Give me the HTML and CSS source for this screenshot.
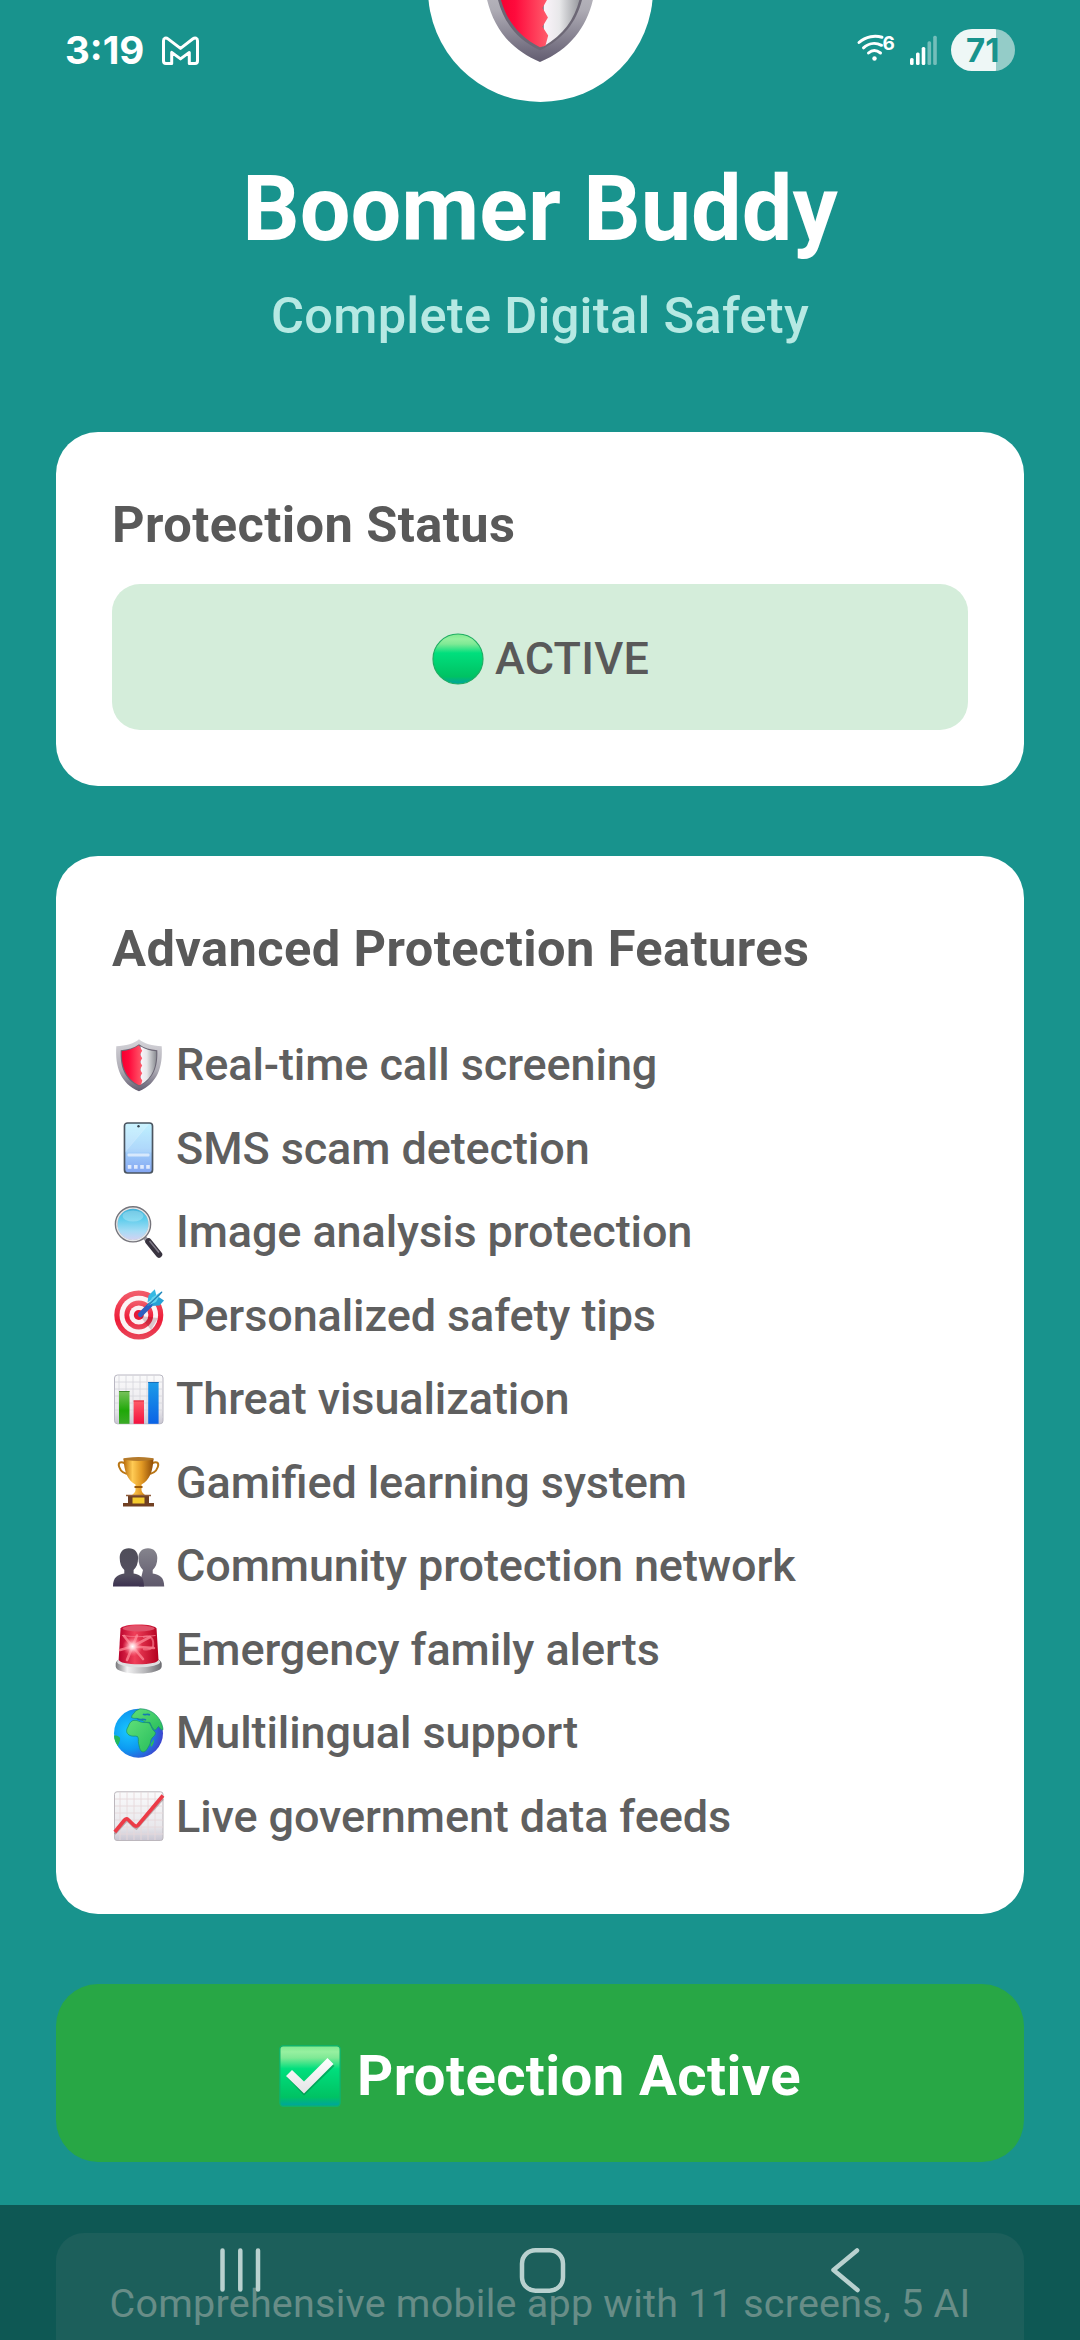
FILE: index.html
```html
<!DOCTYPE html>
<html lang="en">
<head>
<meta charset="utf-8">
<title>Boomer Buddy</title>
<link rel="stylesheet" href="styles.css">
</head>
<body>
<svg class="defs" width="0" height="0" aria-hidden="true">
  <defs>
    <linearGradient id="rim" x1="0" y1="0" x2="0" y2="1"><stop offset="0" stop-color="#d6d5da"/><stop offset=".6" stop-color="#adabb4"/><stop offset="1" stop-color="#625c70"/></linearGradient>
    <linearGradient id="shieldRed" x1="0" y1="0" x2="1" y2="0"><stop offset="0" stop-color="#f5002f"/><stop offset=".35" stop-color="#ff0a3c"/><stop offset="1" stop-color="#ff5d6c"/></linearGradient>
    <linearGradient id="shieldWhite" x1="0" y1="0" x2="1" y2="0"><stop offset="0" stop-color="#fbf4fa"/><stop offset=".4" stop-color="#e8e8ea"/><stop offset="1" stop-color="#8b8d93"/></linearGradient>
    <linearGradient id="green" x1="0" y1="0" x2="0" y2="1"><stop offset="0" stop-color="#7fea90"/><stop offset=".1" stop-color="#96f0a0"/><stop offset=".2" stop-color="#7fe995"/><stop offset=".38" stop-color="#00df7d"/><stop offset=".85" stop-color="#00c263"/><stop offset="1" stop-color="#00a3a0"/></linearGradient>
    <linearGradient id="phoneGlass" x1="0" y1="0" x2="0" y2="1"><stop offset="0" stop-color="#b6efff"/><stop offset=".5" stop-color="#a5d4fb"/><stop offset="1" stop-color="#83a5f2"/></linearGradient>
    <linearGradient id="lens" x1="0" y1="0" x2="0" y2="1"><stop offset="0" stop-color="#3fb0d8"/><stop offset=".35" stop-color="#5fcdec"/><stop offset=".7" stop-color="#a5dcf5"/><stop offset="1" stop-color="#d9d0f2"/></linearGradient>
    <linearGradient id="paper" x1="0" y1="0" x2="0" y2="1"><stop offset="0" stop-color="#fafafb"/><stop offset=".7" stop-color="#e9e8ec"/><stop offset="1" stop-color="#c9c6d2"/></linearGradient>
    <linearGradient id="barGreen" x1="0" y1="0" x2="0" y2="1"><stop offset="0" stop-color="#79c25c"/><stop offset=".6" stop-color="#1fa808"/><stop offset="1" stop-color="#3bab27"/></linearGradient>
    <linearGradient id="barRed" x1="0" y1="0" x2="0" y2="1"><stop offset="0" stop-color="#ff5c68"/><stop offset="1" stop-color="#f3113f"/></linearGradient>
    <linearGradient id="barBlue" x1="0" y1="0" x2="0" y2="1"><stop offset="0" stop-color="#1d9ce8"/><stop offset="1" stop-color="#0a63e6"/></linearGradient>
    <linearGradient id="gold" x1="0" y1="0" x2="1" y2="0"><stop offset="0" stop-color="#b86a08"/><stop offset=".3" stop-color="#ffcb55"/><stop offset=".6" stop-color="#e39a24"/><stop offset="1" stop-color="#8d4a06"/></linearGradient>
    <linearGradient id="person" x1="0" y1="0" x2="0" y2="1"><stop offset="0" stop-color="#4f4e59"/><stop offset=".7" stop-color="#545060"/><stop offset="1" stop-color="#3c3150"/></linearGradient>
    <linearGradient id="personBack" x1="0" y1="0" x2="0" y2="1"><stop offset="0" stop-color="#85848d"/><stop offset="1" stop-color="#5f596c"/></linearGradient>
    <linearGradient id="steel" x1="0" y1="0" x2="1" y2="0"><stop offset="0" stop-color="#77777b"/><stop offset=".25" stop-color="#f2f2f3"/><stop offset=".65" stop-color="#b5b5b8"/><stop offset="1" stop-color="#6b6b70"/></linearGradient>
    <linearGradient id="lamp" x1="0" y1="0" x2="1" y2="0"><stop offset="0" stop-color="#b8002b"/><stop offset=".4" stop-color="#f0405a"/><stop offset="1" stop-color="#b3001f"/></linearGradient>
    <radialGradient id="flash"><stop offset="0" stop-color="#fff"/><stop offset=".25" stop-color="#ffd0d6"/><stop offset="1" stop-color="#ff6c80" stop-opacity="0"/></radialGradient>
    <radialGradient id="ocean" cx=".3" cy=".45" r=".75"><stop offset="0" stop-color="#19c8ff"/><stop offset=".5" stop-color="#0d9bf2"/><stop offset="1" stop-color="#4437c9"/></radialGradient>
    <linearGradient id="land" x1="0" y1="0" x2="1" y2="1"><stop offset="0" stop-color="#5fdf78"/><stop offset="1" stop-color="#27bd5c"/></linearGradient>
    <linearGradient id="targetRed" x1="0" y1="0" x2="0" y2="1"><stop offset="0" stop-color="#f2606d"/><stop offset=".6" stop-color="#ee1c38"/><stop offset="1" stop-color="#e8485b"/></linearGradient>
    <linearGradient id="tick" x1="0" y1="0" x2="0" y2="1"><stop offset="0" stop-color="#fff"/><stop offset="1" stop-color="#e4e4e6"/></linearGradient>
    <symbol id="shield" viewBox="0 0 54 54">
      <path d="M27 1.3C22.500 5.500 13.500 7.800 4.300 8.200 3 29 8.500 45.500 27 53.200 45.500 45.500 51 29 49.700 8.200 40.500 7.800 31.500 5.500 27 1.300Z" fill="url(#rim)"/>
      <path d="M27 6.300C22 10 16 11.800 8.700 12.300 8 29 12.500 41.500 27 48.500 41.500 41.500 46 29 45.300 12.300 38 11.800 32 10 27 6.300Z" fill="#6c6775"/>
      <path d="M28.500 8.200C33 11 38.500 12.800 44.200 13.200 44.800 28 41 39.800 28.500 46.800Z" fill="url(#shieldWhite)"/>
      <path d="M27 7.300C22 10.800 16.200 12.600 9.800 13.200 9.200 28 13.500 40.500 27 47.300L29.200 46.600 30.300 42.500 28 39 30.200 35.300 28 31.400 30.200 27.500 28 24 30.200 20.300 28 16.500 30.200 12.800Z" fill="url(#shieldRed)"/>
    </symbol>
  </defs>
</svg>

<div class="screen">
  <main class="page">
    <header class="hero">
      <div class="logo"><svg class="logo-icon"><use href="#shield"/></svg></div>
      <h1 class="app-name">Boomer Buddy</h1>
      <p class="tagline">Complete Digital Safety</p>
    </header>

    <section class="card status-card">
      <h2 class="card-title">Protection Status</h2>
      <div class="status">
        <svg class="emoji" viewBox="0 0 54 54"><circle cx="27" cy="27" r="25" fill="url(#green)" stroke="#1fae62" stroke-width="1.200"/></svg>
        <span>ACTIVE</span>
      </div>
    </section>

    <section class="card features-card">
      <h2 class="card-title">Advanced Protection Features</h2>
      <ul class="features">
        <li><svg class="emoji"><use href="#shield"/></svg><span>Real-time call screening</span></li>
        <li><svg class="emoji" viewBox="0 0 54 54">
          <rect x="12.500" y="2" width="28" height="50" rx="3" fill="url(#phoneGlass)" stroke="#4b5560" stroke-width="1.700"/>
          <path d="M13.400 31V3H37Z" fill="#fff" opacity=".28"/><path d="M13.400 30 36 3h3.700v28.500H13.400Z" fill="#fff" opacity=".12"/>
          <circle cx="26.500" cy="5.300" r="1.200" fill="#33404c"/><rect x="15.500" y="32.500" width="22" height="3" rx="1" fill="#fff" opacity=".6"/>
          <path d="M15.800 44h3.600v3.800h-3.600zM22 44h3.600v3.800H22zM28.200 44h3.600v3.800h-3.600zM34.200 44h3.600v3.800h-3.600z" fill="#dfeafd"/></svg><span>SMS scam detection</span></li>
        <li><svg class="emoji" viewBox="0 0 54 54">
          <path d="M32 32 39 40" stroke="#99979f" stroke-width="4"/>
          <path d="M36.500 36.500 47 49.500" stroke="#38333f" stroke-width="6.500" stroke-linecap="round"/><path d="M37.500 36 47 47.500" stroke="#817c89" stroke-width="1.500"/>
          <circle cx="21" cy="19.300" r="17" fill="url(#lens)" stroke="#75747b" stroke-width="2.600"/><circle cx="21" cy="19.300" r="16.200" fill="none" stroke="#e6e8ea" stroke-width="1.400"/>
          <ellipse cx="21" cy="11" rx="10.500" ry="5.500" fill="#fff" opacity=".25"/></svg><span>Image analysis protection</span></li>
        <li><svg class="emoji" viewBox="0 0 54 54">
          <circle cx="26.800" cy="27" r="24.500" fill="url(#targetRed)"/><circle cx="26.800" cy="27" r="19.300" fill="#fbf4f5"/><circle cx="26.800" cy="27" r="14.400" fill="url(#targetRed)"/><circle cx="26.800" cy="27" r="9.600" fill="#faf1f3"/><circle cx="26.800" cy="27" r="5" fill="#e51a36"/>
          <path d="M28 28 46 30 39 42Z" fill="#65202d" opacity=".22"/>
          <path d="M28.500 26.500 40.500 14.500" stroke="#2e5fc0" stroke-width="5.200" stroke-linecap="round"/>
          <path d="M35.500 14.500 36.500 7.500 42.800 1.300 44.500 8Z" fill="#36b9e3"/><path d="M39.500 18 47.500 17.500 52 12.600 46 8.500Z" fill="#26a2d6"/><path d="M35.500 18 40 9.500 50.500 3 44 14Z" fill="#62d4ee"/><path d="M36 17.500 50 4" stroke="#247fb5" stroke-width="1.200"/></svg><span>Personalized safety tips</span></li>
        <li><svg class="emoji" viewBox="0 0 54 54">
          <rect x="2.500" y="3" width="48.500" height="48.800" rx="3" fill="url(#paper)" stroke="#b9b7c2"/>
          <path d="M7 3v48M14 3v48M21 3v48M28 3v48M35 3v48M42 3v48M3 10h48M3 17h48M3 24h48M3 31h48M3 38h48M3 45h48" stroke="#d5d6dc" stroke-width=".8"/>
          <path d="M7 19h10.500v32.800H7z" fill="url(#barGreen)"/><path d="M21.600 28.500h10.400v23.300H21.600z" fill="url(#barRed)"/><path d="M36.200 10h10.400v41.800H36.200z" fill="url(#barBlue)"/>
          <path d="M7 19.500h10.500" stroke="#3e8c2a"/><path d="M21.600 29h10.400" stroke="#d92b40"/><path d="M36.200 10.500h10.400" stroke="#166fbb"/></svg><span>Threat visualization</span></li>
        <li><svg class="emoji" viewBox="0 0 54 54">
          <path d="M13 8.500C8 5.500 5.800 8 7.200 12 8.800 16.800 13 19 18 19M40 8.500c5-3 7.200-.5 5.800 3.500C44.200 16.800 40 19 35 19" fill="none" stroke="#b97616" stroke-width="2"/>
          <path d="M11.500 3.500h30C41 16 37.500 25.500 29.500 29.500v5.500c0 3 4 4.500 5 7.500h-16c1-3 5-4.500 5-7.500v-5.500C15.500 25.500 12 16 11.500 3.500Z" fill="url(#gold)"/>
          <ellipse cx="26.500" cy="4" rx="15.300" ry="1.900" fill="#b47a2b"/><path d="M22.500 32h8" stroke="#9a5909" stroke-width="2"/>
          <path d="M16 40h21v9H16z" fill="#6d3f25"/><path d="M11 48h31v3.500H11z" fill="#714022"/><path d="M14 40.500h25" stroke="#8f5b38" stroke-width="1.500"/><path d="M20.500 42.500h12v6h-12z" fill="#f5cb2e"/></svg><span>Gamified learning system</span></li>
        <li><svg class="emoji" viewBox="0 0 54 54">
          <path d="M36 9.200c6 0 9.300 4 9.300 9.800 0 5.500-1.800 9.500-4.600 12v3.500c7 1.200 11.500 3.500 11.500 13H27l4-16.500c-2.800-2.500-4.600-6.500-4.600-12 0-5.800 3.500-9.800 9.600-9.800Z" fill="url(#personBack)"/>
          <path d="M16.800 9.200c6 0 9.300 4 9.300 9.800 0 5.500-1.700 9.500-4.500 12v3.500c7 1.200 10.400 3.500 10.400 13H1C1 38 5.500 35.700 12.300 34.500V31c-2.800-2.500-4.600-6.500-4.600-12 0-5.800 3.100-9.800 9.100-9.800Z" fill="url(#person)"/></svg><span>Community protection network</span></li>
        <li><svg class="emoji" viewBox="0 0 54 54">
          <path d="M3.700 41.500c0-4.500 10-7 23-7s23 2.500 23 7v3c0 4.300-10 7-23 7s-23-2.700-23-7Z" fill="url(#steel)"/><ellipse cx="26.700" cy="40" rx="21.500" ry="5.200" fill="#dedee0"/>
          <path d="M8.500 6.500C10 4 17 2.500 26.500 2.500S43 4 44.500 6.500l2 31c0 3.200-9 4.800-19.800 4.800S6.700 40.700 6.700 37.500Z" fill="url(#lamp)"/>
          <ellipse cx="26.600" cy="6.500" rx="16" ry="2.900" fill="#e0526a"/>
          <path d="M10 13.500c10 1.500 24 1.500 33.500 0" stroke="#f26b80" fill="none"/>
          <path d="M20.500 24.500 12 14M20.500 24.500 25 13.500M20.500 24.500 38 15M20.500 24.500 42 26M20.500 24.500 31 37M20.500 24.500 15 38M20.500 24.500 8 28" stroke="#ff8b99" stroke-width="2.600" stroke-linecap="round" opacity=".75"/><path d="M31 15c9-3 11 3 10 10-3 3-6 3-10 2" stroke="#f8798b" stroke-width="2" fill="none" opacity=".7"/>
          <circle cx="20.500" cy="24.500" r="10" fill="url(#flash)"/></svg><span>Emergency family alerts</span></li>
        <li><svg class="emoji" viewBox="0 0 54 54">
          <circle cx="26.500" cy="27.200" r="24.500" fill="url(#ocean)"/>
          <path d="M21 14.500c5-1 6 1.800 10 2 3 .2 5.500-.5 7 1.500 1.500 2.500 2 5.500 4.500 7.500 2 1.200.5 4-2 6-2.500 2.500-1.500 5.500-3.500 8.500-2 3-3 6-6 6-3.500-.5-3.500-5.500-4.500-8.500-.5-2.500.5-5-1-7-2.500-1-6 .5-8.500-1.500C14 27 14 24 16 21c1-2.500 2-5.500 5-6.500Z" fill="url(#land)" stroke="#178e68" stroke-width=".7"/>
          <path d="M19.500 11.500c0-3 3-4 4-6.500l4.500-2.200c8 0 15 3.700 19 9.900 2.500 3.500 3.800 7.500 4 11-2 1-3-1.500-4.500-3.200-1.500 1-2 4-4 3.500-2-1-3.500-5-4.500-7.500-3-.5-5 .5-6.500-1.500-2-1.500-4.500-.5-6-2.500-2-.5-3 .5-6-1Z" fill="url(#land)" stroke="#178e68" stroke-width=".7"/>
          <path d="M25 12.500c3 2.500 5-.5 9 1.500M31 8c2 2 4-1 7 1" stroke="#167ab0" stroke-width="1.600" fill="none"/>
          <path d="M39.500 36.500c1.500-1 1-2.500 2.200-3 .8 3-1 6-2.500 7.500-1-1-.8-3 .3-4.500Z" fill="#2dbd5c"/><path d="M2 29.500c3-.5 7 1 6 4.500-.8 3-1.500 4-2.200 6C3.500 37 2 33 2 29.500Z" fill="#22b85d"/></svg><span>Multilingual support</span></li>
        <li><svg class="emoji" viewBox="0 0 54 54">
          <rect x="2.500" y="2.800" width="48.500" height="48.700" rx="2.500" fill="url(#paper)" stroke="#bcb7bd"/>
          <path d="M8 3v48M15 3v48M22 3v48M29 3v48M36 3v48M43 3v48M3 10h48M3 17h48M3 24h48M3 31h48M3 38h48M3 45h48" stroke="#e6d8da" stroke-width=".9"/>
          <path d="M2.800 45 15 31.500c3 2.500 6 6.500 9.500 8.300L51 10" fill="none" stroke="#7d5a60" stroke-width="2" opacity=".45"/>
          <path d="M2.800 43 12.500 31c1.300-1.400 2.500-1.500 3.800-.3l5.700 5.500c1.400 1.200 2.700 1.200 4 0L51 6.500" fill="none" stroke="#ec3b47" stroke-width="3.600"/></svg><span>Live government data feeds</span></li>
      </ul>
    </section>

    <button class="cta">
      <svg class="cta-icon" viewBox="0 0 62 62"><rect x=".8" y=".8" width="60.400" height="60.400" rx="3.500" fill="url(#green)" stroke="#10b268" stroke-width="1.400"/>
        <path d="M8 32.500 14 27 25 37.500 49.500 15 55.500 21 25 50.500Z" fill="#04703e" opacity=".45"/>
        <path d="M7 31 13 25 25 36.500 48.500 13 54.500 19 25 48.500Z" fill="url(#tick)"/></svg>
      <span>Protection Active</span>
    </button>

    <footer class="about"><p>Comprehensive mobile app with 11 screens, 5 AI</p></footer>
  </main>

  <div class="status-bar">
    <div class="status-left">
      <span class="clock">3:19</span>
      <svg class="mail" viewBox="0 0 37 29"><path d="M1.500 4.300C1.500 1.500 4 .8 6 2.400L18.500 12 31 2.400c2-1.600 4.500-.9 4.500 1.900v20.200c0 1.600-.8 2.500-2.500 2.500h-5.700V16L18.500 22.500 9.700 16v11H4c-1.700 0-2.500-.9-2.500-2.500Z" transform="translate(0 .4)"/></svg>
    </div>
    <div class="status-right">
      <svg class="wifi" viewBox="0 0 44 32"><path d="M3 11.500C10 5 19.500 4.300 26 6.300M7.500 16.800C13 11.800 20 11.500 25.500 14.300M12.500 22c3.500-3.200 8-3.200 12 0" /><circle cx="18.500" cy="27.500" r="2.200"/><text x="26.500" y="18.500">6</text></svg>
      <svg class="signal" viewBox="0 0 28 30"><rect x="0" y="23" width="3.600" height="7" rx="1.500"/><rect x="6" y="17.500" width="3.600" height="12.500" rx="1.500"/><rect x="11.700" y="12" width="3.600" height="18" rx="1.500"/><rect x="17.500" y="6.200" width="3.600" height="23.800" rx="1.500" opacity=".4"/><rect x="23.200" y=".7" width="3.600" height="29.300" rx="1.500" opacity=".4"/></svg>
      <span class="battery">71</span>
    </div>
  </div>

  <nav class="nav-bar">
    <svg viewBox="0 0 54 54"><path d="M9.500 6.500v39M27.300 6.500v39M45 6.500v39"/></svg>
    <svg viewBox="0 0 54 54"><rect x="6" y="6.200" width="41" height="40.500" rx="13.500"/></svg>
    <svg viewBox="0 0 54 54"><path d="M39 6.500 15.500 26 39.500 46"/></svg>
  </nav>
</div>
</body>
</html>
```

FILE: styles.css
```css
* { box-sizing: border-box; }

body {
  margin: 0;
  font-family: Roboto, "Liberation Sans", sans-serif;
  background: #18938d;
}

h1, h2, p, ul { margin: 0; padding: 0; font-weight: inherit; }

.defs { position: absolute; }

.screen {
  position: relative;
  width: 1080px;
  height: 2340px;
  overflow: hidden;
  background: #18938d;
}

.page {
  display: flex;
  flex-direction: column;
  padding: 0 56px;
}

.hero {
  display: flex;
  flex-direction: column;
  align-items: center;
  height: 432px;
}

.logo {
  display: flex;
  flex: none;
  align-items: center;
  justify-content: center;
  width: 225px;
  height: 225px;
  margin-top: -123px;
  border-radius: 50%;
  background: #fff;
}

.logo-icon { width: 134px; height: 134px; margin-top: 14px; }

.app-name {
  margin-top: 54px;
  font-size: 90px;
  font-weight: 700;
  line-height: 108px;
  color: #fff;
}

.tagline {
  margin-top: 22px;
  font-size: 50.600px;
  font-weight: 500;
  letter-spacing: .27px;
  line-height: 60px;
  color: #b6e9e3;
}

.card {
  padding: 56px;
  border-radius: 42px;
  background: #fff;
}

.card-title {
  font-size: 50.600px;
  font-weight: 700;
  letter-spacing: .4px;
  line-height: 73px;
  color: #595959;
}

.status-card { height: 354px; }

.status {
  display: flex;
  align-items: center;
  justify-content: center;
  gap: 10px;
  height: 146px;
  margin-top: 23px;
  border-radius: 28px;
  background: #d4edda;
  font-size: 45px;
  font-weight: 500;
  letter-spacing: .2px;
  color: #595959;
  padding-top: 4px;
}

.status span { padding-bottom: 2px; }

.emoji { flex: none; width: 54px; height: 54px; }

.features-card { height: 1058px; margin-top: 70px; }

.features {
  margin-top: 38px;
  list-style: none;
}

.features li {
  display: flex;
  align-items: center;
  gap: 10px;
  height: 83.500px;
  font-size: 45px;
  font-weight: 500;
  letter-spacing: -.1px;
  font-feature-settings: "liga" 1;
  color: #5f5f5f;
}

.cta {
  display: flex;
  align-items: center;
  justify-content: center;
  gap: 16px;
  height: 178px;
  margin-top: 70px;
  padding: 5px 0 0;
  border: 0;
  border-radius: 42px;
  background: #28a745;
  color: #fff;
  font: 700 56.250px Roboto, "Liberation Sans", sans-serif;
  letter-spacing: .4px;
}

.cta-icon { width: 62px; height: 62px; }

.about {
  height: 180px;
  margin-top: 71px;
  padding: 44px 0;
  border-radius: 28px;
  background: rgba(255, 255, 255, .1);
  text-align: center;
  white-space: nowrap;
  font-size: 39.400px;
  letter-spacing: .28px;
  line-height: 53px;
  color: #adebe2;
}

.status-bar {
  position: absolute;
  inset: 0 0 auto;
  display: flex;
  justify-content: space-between;
  height: 100px;
  padding: 0 65px;
  color: #fff;
  font-family: Inter, "Liberation Sans", sans-serif;
  font-weight: 700;
}

.status-left, .status-right { display: flex; align-items: center; }

.clock { font-size: 38.500px; }

.mail {
  width: 37px;
  height: 29px;
  margin-left: 18px;
  fill: none;
  stroke: #fff;
  stroke-width: 3;
  stroke-linejoin: round;
}

.wifi { width: 44px; height: 32px; margin: -6px 10px 0 0; fill: #fff; }
.wifi path { fill: none; stroke: #fff; stroke-width: 3; stroke-linecap: round; }
.wifi text { font-size: 19px; font-weight: 700; }

.signal { width: 28px; height: 30px; margin-right: 13px; fill: #fff; }

.battery {
  width: 64px;
  height: 42px;
  border-radius: 21px;
  background: linear-gradient(90deg, #eef7f6 45px, #94ccc8 45px);
  color: #18938d;
  font-size: 33px;
  line-height: 42px;
  padding-left: 15px;
}

.nav-bar {
  position: absolute;
  inset: auto 0 0;
  display: flex;
  justify-content: space-between;
  height: 135px;
  padding: 39px 208px 0 213px;
  background: rgba(0, 0, 0, .4);
}

.nav-bar svg {
  width: 54px;
  height: 54px;
  fill: none;
  stroke: #b9d1cf;
  stroke-width: 4.500;
  stroke-linecap: round;
  stroke-linejoin: round;
}
```
